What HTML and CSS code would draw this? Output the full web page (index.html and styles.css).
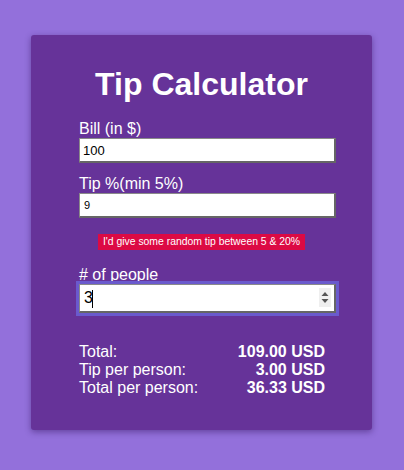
FILE: index.html
```html
<!DOCTYPE html>
<html lang="en">
<head>
<meta charset="utf-8">
<title>Tip Calculator</title>
<link rel="stylesheet" href="styles.css">
</head>
<body>
  <main class="card">
    <h1 class="title">Tip Calculator</h1>

    <div class="field">
      <label class="label" for="bill">Bill (in $)</label>
      <input class="input input-bill" id="bill" type="text" value="100">
    </div>

    <div class="field">
      <label class="label" for="tip">Tip %(min 5%)</label>
      <input class="input input-tip" id="tip" type="text" value="9">
    </div>

    <div class="hint-row">
      <span class="hint">I'd give some random tip between 5 &amp; 20%</span>
    </div>

    <div class="field field-people">
      <label class="label" for="people">
        # of people</label>
      <div class="input-wrap">
        <input class="input input-people" id="people" type="text" value="3">
        <span class="caret"></span>
        <span class="spinner">
          <svg width="12" height="19" viewBox="0 0 12 19">
            <path d="M2.5 8 L6 4 L9.5 8 Z" fill="#555"/>
            <path d="M2.5 11 L6 15 L9.5 11 Z" fill="#555"/>
          </svg>
        </span>
      </div>
    </div>

    <div class="results">
      <span class="res-label">Total:</span>
      <span class="res-value">109.00 USD</span>
      <span class="res-label">Tip per person:</span>
      <span class="res-value">3.00 USD</span>
      <span class="res-label">Total per person:</span>
      <span class="res-value">36.33 USD</span>
    </div>
  </main>
</body>
</html>
```

FILE: styles.css
```css
html, body {
  margin: 0;
  padding: 0;
}

body {
  background: #9370db;
  font-family: "Liberation Sans", Arial, Helvetica, sans-serif;
  color: #fff;
  padding-top: 35px;
  min-height: 470px;
  box-sizing: border-box;
}

.card {
  display: block;
  width: 341px;
  margin-left: 31px;
  background: #663399;
  border-radius: 3px;
  box-shadow: 0 2px 6px rgba(40, 10, 80, 0.45);
  padding: 31px 0 32px 0;
  box-sizing: border-box;
  height: 395px;
}

.title {
  margin: 0;
  font-size: 32px;
  line-height: 37px;
  font-weight: bold;
  text-align: center;
}

.field {
  margin: 16px 0 0 48px;
  width: 257px;
}

.field + .field {
  margin-top: 11px;
}

.label {
  display: block;
  font-size: 16px;
  line-height: 19px;
}

.input {
  display: block;
  width: 100%;
  box-sizing: border-box;
  margin: 0;
  height: 25px;
  padding: 0 3px;
  background: #fff;
  color: #000;
  border-style: solid;
  border-color: #8a8a8a #666 #666 #8a8a8a;
  border-width: 1px 2px 2px 1px;
  font-family: "Liberation Sans", Arial, Helvetica, sans-serif;
  outline: none;
}

.input-bill {
  font-size: 13px;
}

.input-tip {
  font-size: 11px;
  padding-left: 4px;
}

.hint-row {
  display: flex;
  justify-content: center;
  margin-top: 16px;
}

.hint {
  background: #dc0a44;
  color: #fff;
  font-size: 10.4px;
  line-height: 16px;
  padding: 0 5px;
}

.field.field-people {
  margin-top: 15px;
}

.input-wrap {
  position: relative;
}

.input-people {
  height: 29px;
  font-size: 16px;
  padding-left: 4px;
  outline: 3px solid #6a5acd;
}

.caret {
  position: absolute;
  left: 13px;
  top: 6px;
  width: 1px;
  height: 18px;
  background: #000;
}

.spinner {
  position: absolute;
  right: 5px;
  top: 4px;
  width: 12px;
  height: 19px;
  background: #efefef;
  display: flex;
}

.results {
  display: grid;
  grid-template-columns: 1fr auto;
  width: 246px;
  margin: 30px 0 0 48px;
  font-size: 16px;
  line-height: 18px;
}

.res-value {
  font-weight: bold;
  text-align: right;
}
```
